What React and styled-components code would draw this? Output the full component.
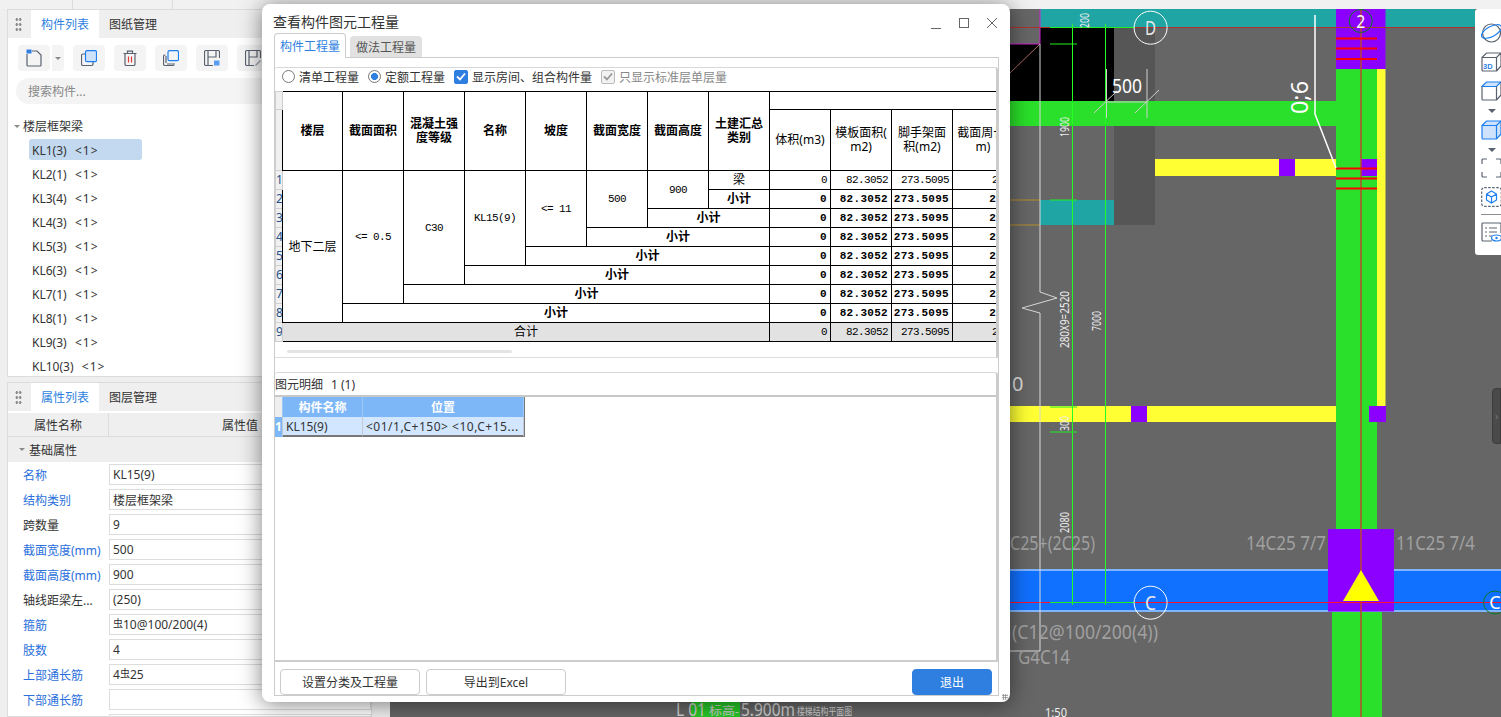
import styled, { createGlobalStyle } from "styled-components";

const GlobalStyle = createGlobalStyle`
  html, body {
    margin: 0;
    height: 100%;
    overflow: hidden;
    background: #f1f1f1;
    font-family: "Noto Sans", "Noto Sans CJK SC", sans-serif;
    font-size: 12px;
    color: #333;
  }
`;

const Page = styled.div`
  display: flex;
  flex-direction: column;
  height: 717px;
  width: 1501px;
  position: relative;
  overflow: hidden;
`;

const TopStrip = styled.div`
  display: flex;
  height: 9px;
  flex: none;
  background: #f1f1f1;
`;

const StripCell = styled.div`
  width: ${(p) => p.$w}px;
  border-right: 1px solid #dcdcdc;
`;

const Workspace = styled.div`
  display: flex;
  flex: 1;
  min-height: 0;
`;

const Sidebar = styled.div`
  width: 390px;
  flex: none;
  box-sizing: border-box;
  padding: 0 18px 0 7px;
  display: flex;
  flex-direction: column;
  gap: 5px;
  background: #efefef;
`;

const Panel = styled.section`
  background: #fff;
  border: 1px solid #dcdcdc;
  box-sizing: border-box;
  overflow: hidden;
  height: ${(p) => (p.$h ? `${p.$h}px` : "auto")};
  flex: ${(p) => (p.$h ? "none" : 1)};
`;

const PanelHead = styled.div`
  height: 28px;
  background: #efefef;
  display: flex;
  align-items: stretch;
  padding-left: 6px;
`;

const Grip = styled.div`
  width: 7px;
  margin: 7px 9px 7px 1px;
  background-image: radial-gradient(circle, #8a8a8a 1.2px, transparent 1.4px);
  background-size: 3.5px 5px;
`;

const HeadTab = styled.div`
  width: 68px;
  display: flex;
  align-items: center;
  justify-content: center;
  background: ${(p) => (p.$active ? "#fff" : "transparent")};
  color: ${(p) => (p.$active ? "#2e7fe0" : "#333")};
`;

const Toolbar = styled.div`
  display: flex;
  gap: 9px;
  padding: 7px 0 0 10px;
`;

const ToolBtn = styled.div`
  width: 32px;
  height: 26px;
  background: #f4f4f4;
  border-radius: 4px;
  flex: none;
  display: flex;
  align-items: center;
  justify-content: center;
`;

const SplitCaret = styled.div`
  width: 12px;
  height: 26px;
  margin-left: -8px;
  background: #f4f4f4;
  border-left: 1px solid #fff;
  border-radius: 0 4px 4px 0;
  display: flex;
  align-items: center;
  justify-content: center;
  flex: none;
`;

const Caret = styled.i`
  display: block;
  width: 0;
  height: 0;
  border-left: ${(p) => p.$s || 3}px solid transparent;
  border-right: ${(p) => p.$s || 3}px solid transparent;
  border-top: ${(p) => p.$s || 3}px solid ${(p) => p.$c || "#8a8a8a"};
`;

const Search = styled.div`
  margin: 7px 0 0 8px;
  height: 26px;
  background: #f4f4f4;
  border-radius: 13px;
  padding-left: 12px;
  display: flex;
  align-items: center;
  color: #888;
`;

const TreeHead = styled.div`
  display: flex;
  align-items: center;
  gap: 3px;
  height: 24px;
  margin-top: 10px;
  padding-left: 6px;
`;

const TreeList = styled.div`
  display: flex;
  flex-direction: column;
  padding-left: 21px;
`;

const TreeItem = styled.div`
  height: 24px;
  display: flex;
  align-items: center;
  white-space: pre;
  position: relative;
  padding-left: 3px;
  width: 113px;
  box-sizing: border-box;
  &::before {
    content: "";
    display: ${(p) => (p.$selected ? "block" : "none")};
    position: absolute;
    inset: 1px 0 2px 0;
    background: #c2d9f0;
    border-radius: 3px;
  }
  span {
    position: relative;
  }
`;

const Suffix = styled.span`
  letter-spacing: 1px;
  margin-left: 2px;
`;

const PropHead = styled.div`
  display: flex;
  height: 23px;
  margin-top: 2px;
  background: #efefef;
  border-bottom: 1px solid #dcdcdc;
`;

const PropHeadCell = styled.div`
  display: flex;
  align-items: center;
  justify-content: center;
  width: ${(p) => p.$w}px;
  flex: ${(p) => (p.$w ? "none" : 1)};
  border-right: ${(p) => (p.$w ? "1px solid #dcdcdc" : "0")};
  box-sizing: border-box;
`;

const PropGroup = styled.div`
  display: flex;
  align-items: center;
  gap: 4px;
  height: 25px;
  background: #eeeeee;
  padding-left: 11px;
`;

const PropRow = styled.div`
  display: flex;
  align-items: center;
  height: 25px;
`;

const PropLabel = styled.div`
  width: 101px;
  flex: none;
  box-sizing: border-box;
  padding-left: 15px;
  white-space: nowrap;
  color: ${(p) => (p.$blue ? "#2a6fdb" : "#333")};
`;

const PropValue = styled.div`
  flex: 1;
  height: 21px;
  box-sizing: border-box;
  border: 1px solid #dddddd;
  padding-left: 3px;
  display: flex;
  align-items: center;
  white-space: pre;
`;

const RebarMark = styled.span`
  font-size: 10px;
  position: relative;
  top: -2px;
`;

const Canvas = styled.main`
  flex: 1;
  position: relative;
  background: #666;
  overflow: hidden;
`;

const Drawing = styled.svg`
  display: block;
  font-family: "Noto Sans", "Noto Sans CJK SC", sans-serif;
`;

const SideTools = styled.aside`
  position: absolute;
  right: 0;
  top: 0;
  width: 26px;
  height: 246px;
  box-sizing: border-box;
  padding: 14px 0 0 6px;
  background: #fff;
  border-radius: 3px 0 0 3px;
  display: flex;
  flex-direction: column;
  overflow: hidden;
`;

const SideIcon = styled.div`
  height: 20px;
  margin-top: ${(p) => p.$mt || 0}px;
  flex: none;
`;

const SideCaret = styled.div`
  height: 4px;
  margin-top: 8px;
  margin-bottom: -1px;
  padding-left: 7px;
`;

const SideRule = styled.div`
  height: 1px;
  margin: 7px 0;
  background: #8f8f8f;
`;

const EdgeHandle = styled.div`
  position: absolute;
  right: 0;
  top: 379px;
  width: 9px;
  height: 56px;
  background: #4a4a4a;
  border: 1px solid #3c3c3c;
  box-sizing: border-box;
  border-radius: 4px 0 0 4px;
  color: #777;
  font-size: 10px;
  display: flex;
  align-items: center;
  padding-left: 2px;
`;

const Dialog = styled.div`
  position: absolute;
  left: 262px;
  top: 4px;
  width: 748px;
  height: 698px;
  background: #fff;
  border-radius: 8px;
  box-shadow: 0 2px 22px rgba(0, 0, 0, 0.5);
  display: flex;
  flex-direction: column;
  box-sizing: border-box;
  padding: 0 11px 6px 12px;
`;

const TitleBar = styled.header`
  height: 29px;
  flex: none;
  display: flex;
  align-items: center;
  justify-content: space-between;
  padding-top: 4px;
  box-sizing: border-box;
  margin-left: -1px;
  font-size: 14px;
  color: #333;
`;

const WindowBtns = styled.div`
  display: flex;
  gap: 14px;
  margin-top: 4px;
`;

const DialogTabs = styled.div`
  display: flex;
  align-items: flex-end;
  gap: 4px;
  height: 24px;
  flex: none;
`;

const DialogTab = styled.div`
  width: 72px;
  box-sizing: border-box;
  display: flex;
  align-items: center;
  justify-content: center;
  height: ${(p) => (p.$active ? 25 : 21)}px;
  margin-bottom: ${(p) => (p.$active ? -1 : 0)}px;
  background: ${(p) => (p.$active ? "#fff" : "#e1e1e1")};
  color: ${(p) => (p.$active ? "#2e7fe0" : "#555")};
  border: ${(p) => (p.$active ? "1px solid #ccc" : "0")};
  border-bottom: 0;
  border-radius: 4px 4px 0 0;
  position: relative;
`;

const TabBody = styled.div`
  flex: 1;
  min-height: 0;
  border: 1px solid #ccc;
  padding-top: 9px;
  display: flex;
  flex-direction: column;
`;

const QtyPane = styled.div`
  height: 291px;
  flex: none;
  border-top: 1px solid #d8d8d8;
  border-right: 2px solid #ccc;
  border-bottom: 1px solid #ddd;
  border-radius: 3px 3px 0 0;
  box-sizing: border-box;
  display: flex;
  flex-direction: column;
  overflow: hidden;
`;

const Options = styled.div`
  height: 23px;
  flex: none;
  display: flex;
  align-items: center;
  padding: 0 0 6px 7px;
  box-sizing: border-box;
  gap: 9px;
`;

const Option = styled.label`
  display: flex;
  align-items: center;
  gap: 4px;
  color: ${(p) => (p.$muted ? "#888" : "#333")};
`;

const Radio = styled.i`
  width: 13px;
  height: 13px;
  box-sizing: border-box;
  border-radius: 50%;
  border: 1px solid #777;
  background: ${(p) =>
    p.$on ? "radial-gradient(circle, #2e7fe0 3.2px, #fff 3.8px)" : "#fff"};
`;

const Check = styled.i`
  width: 14px;
  height: 14px;
  box-sizing: border-box;
  border-radius: 2px;
  display: flex;
  align-items: center;
  justify-content: center;
  background: ${(p) => (p.$muted ? "#f2f2f2" : "#2e7fe0")};
  border: 1px solid ${(p) => (p.$muted ? "#bbb" : "#2e7fe0")};
`;

const QtyScroll = styled.div`
  flex: none;
  height: 251px;
  overflow: hidden;
`;

const QtyTable = styled.table`
  border-collapse: collapse;
  table-layout: fixed;
  width: 738px;
  font-size: 12px;
  color: #000;

  td,
  th {
    border: 1px solid #000;
    padding: 0;
    overflow: hidden;
    text-align: center;
    line-height: 14px;
    box-sizing: border-box;
  }
`;

const HeadRow = styled.tr`
  height: ${(p) => p.$h}px;
`;

const BodyRow = styled.tr`
  height: 19px;
  background: ${(p) => (p.$total ? "#e2e2e2" : "#fff")};
  font-weight: ${(p) => (p.$bold ? 700 : 400)};
`;

const RowNo = styled.td`
  && {
    border: 1px solid #cfcfcf;
    background: #f0f0f0;
    color: #23528c;
    text-align: left;
    font-weight: 400;
    white-space: nowrap;
  }
`;

const Mono = styled.td`
  && {
    font-family: "Liberation Mono", monospace;
    font-size: 11px;
    letter-spacing: ${(p) => (p.$bold ? "0.3px" : "-0.6px")};
    text-align: ${(p) => (p.$right ? "right" : "center")};
    padding-right: ${(p) => (p.$right ? 3 : 0)}px;
    white-space: nowrap;
  }
`;

const ThinHead = styled.th`
  && {
    font-weight: 400;
  }
`;

const ScrollTrack = styled.div`
  flex: none;
  height: 15px;
  padding: 8px 0 0 12px;
  box-sizing: border-box;
`;

const ScrollThumb = styled.div`
  width: 225px;
  height: 3px;
  background: #e4e4e4;
  border-radius: 2px;
`;

const DetailPane = styled.div`
  margin-top: 14px;
  flex: 1;
  min-height: 0;
  border-top: 1px solid #d8d8d8;
  border-right: 2px solid #ccc;
  border-bottom: 2px solid #ccc;
  border-radius: 3px 3px 0 0;
  display: flex;
  flex-direction: column;
`;

const DetailTitle = styled.div`
  height: 22px;
  flex: none;
  display: flex;
  align-items: center;
  gap: 8px;
  border-bottom: 2px solid #c8c8c8;
  box-sizing: content-box;
`;

const DetailGrid = styled.div`
  display: grid;
  grid-template-columns: 8px 80px 161px;
  grid-template-rows: 20px 20px;
  width: 249px;
  border-right: 1px solid #777;
`;

const GridHead = styled.div`
  background: ${(p) => (p.$corner ? "#eee" : "#7db7f7")};
  color: #fff;
  font-weight: 700;
  display: flex;
  align-items: center;
  justify-content: center;
  border-right: 1px solid #9cc8f8;
`;

const GridCell = styled.div`
  background: ${(p) => (p.$no ? "#7db7f7" : "#d2e7ff")};
  color: ${(p) => (p.$no ? "#fff" : "#333")};
  font-weight: ${(p) => (p.$no ? 700 : 400)};
  display: flex;
  align-items: center;
  padding-left: ${(p) => (p.$no ? 0 : 3)}px;
  letter-spacing: ${(p) => p.$track || 0}px;
  white-space: nowrap;
  overflow: hidden;
  border-right: 1px solid #c2c9d2;
  border-bottom: 2px solid ${(p) => (p.$no ? "#7db7f7" : "#777")};
  box-sizing: border-box;
`;

const Footer = styled.footer`
  height: 33px;
  flex: none;
  display: flex;
  align-items: flex-start;
  gap: 6px;
  padding: 7px 6px 0 5px;
  box-sizing: border-box;
`;

const FootBtn = styled.button`
  width: ${(p) => (p.$primary ? 80 : 140)}px;
  height: 26px;
  margin-left: ${(p) => (p.$primary ? "auto" : 0)};
  border-radius: 4px;
  border: 1px solid ${(p) => (p.$primary ? "#2e7fe0" : "#ccc")};
  background: ${(p) => (p.$primary ? "#2e7fe0" : "#fff")};
  color: ${(p) => (p.$primary ? "#fff" : "#333")};
  font: inherit;
  padding: 0;
`;

const ResizeGrip = styled.div`
  position: absolute;
  right: 2px;
  bottom: 2px;
  width: 6px;
  height: 6px;
  background-image: radial-gradient(circle, #777 0.8px, transparent 1px);
  background-size: 2.5px 2.5px;
`;

const stroke = { fill: "none", stroke: "#5a6270", strokeWidth: 1.2 };
const blue = { fill: "none", stroke: "#1e7ff0", strokeWidth: 1.2 };

const NewIcon = () => (
  <svg width="16" height="18" viewBox="0 0 16 18">
    <rect x="0.5" y="0.5" width="5" height="4" fill="#2e7fe0" />
    <path d="M1 5v11a1 1 0 0 0 1 1h12a1 1 0 0 0 1-1V6l-4-4H6" {...stroke} />
  </svg>
);

const CopyIcon = () => (
  <svg width="16" height="16" viewBox="0 0 16 16">
    <path d="M4 4H2a1.500 1.500 0 0 0-1.500 1.500V14A1.500 1.500 0 0 0 2 15.500h8.500A1.500 1.500 0 0 0 12 14v-2" {...stroke} />
    <rect x="4.500" y="0.700" width="11" height="11" rx="1.500" fill="#cfe2fb" stroke="#1e7ff0" strokeWidth="1.200" />
  </svg>
);

const TrashIcon = () => (
  <svg width="14" height="16" viewBox="0 0 14 16">
    <path d="M0.500 3.500h13M4.500 3V1.200h5V3M2 3.500v10.800a1.200 1.200 0 0 0 1.200 1.200h7.600a1.200 1.200 0 0 0 1.200-1.200V3.500" {...stroke} />
    <path d="M5.500 6.500v6M8.500 6.500v6" fill="none" stroke="#e03a3a" strokeWidth="1.200" />
  </svg>
);

const StackIcon = () => (
  <svg width="16" height="16" viewBox="0 0 16 16">
    <path d="M2.500 5H2A1.500 1.500 0 0 0 .5 6.500V14A1.500 1.500 0 0 0 2 15.500h7.500A1.500 1.500 0 0 0 11 15" {...stroke} />
    <path d="M3 13V6M4 14h8" {...stroke} />
    <rect x="5" y="0.700" width="10.500" height="10" rx="1.500" {...blue} />
  </svg>
);

const SaveIcon = ({ pen }) => (
  <svg width="16" height="16" viewBox="0 0 16 16">
    <path d="M9 15.500H2A1.500 1.500 0 0 1 .5 14V2A1.500 1.500 0 0 1 2 .5h12A1.500 1.500 0 0 1 15.500 2v6" {...stroke} />
    <path d="M4 1v14M4 7h8V1" {...stroke} />
    {pen ? (
      <path d="M10 15l5-5 1 1-5 5z" fill="#9aa3ad" />
    ) : (
      <rect x="10" y="10.500" width="5.500" height="5" fill="#5b9df0" />
    )}
  </svg>
);

const Sphere = () => (
  <svg width="21" height="20" viewBox="0 0 21 20">
    <circle cx="10.500" cy="10" r="9" {...stroke} />
    <ellipse cx="10.500" cy="8.500" rx="11" ry="5" transform="rotate(-28 10.500 8.500)" {...blue} />
  </svg>
);

const Cube3D = () => (
  <svg width="21" height="20" viewBox="0 0 21 20">
    <path d="M1 5.500h14.500V19H2a1 1 0 0 1-1-1zM1 5.500L5.500 1H20v13l-4.500 5M15.500 5.500L20 1" {...stroke} />
    <text x="2" y="16.500" fontSize="7.500" fontWeight="700" fill="#2e7fe0" fontFamily="Liberation Sans, sans-serif">3D</text>
  </svg>
);

const CubeTop = () => (
  <svg width="21" height="20" viewBox="0 0 21 20">
    <path d="M1 5.500L5.500 1H20l-4.500 4.500z" fill="#cfe2fb" stroke="#1e7ff0" strokeWidth="1.200" />
    <path d="M1 5.500V18a1 1 0 0 0 1 1h13.500V5.500M15.500 19L20 14V1" {...stroke} />
  </svg>
);

const CubeSolid = () => (
  <svg width="21" height="20" viewBox="0 0 21 20">
    <path d="M1 5.500L5.500 1H20v13l-4.500 5H2a1 1 0 0 1-1-1z" fill="#cfe2fb" stroke="#1e7ff0" strokeWidth="1.200" />
    <path d="M1 5.500h14.500V19M15.500 5.500L20 1" {...blue} />
  </svg>
);

const DashedBox = () => (
  <svg width="21" height="20" viewBox="0 0 21 20">
    <path d="M1 6V2a1 1 0 0 1 1-1h4M15 1h4a1 1 0 0 1 1 1v4M1 14v4a1 1 0 0 0 1 1h4M15 19h4a1 1 0 0 0 1-1v-4" {...stroke} />
  </svg>
);

const DashedCube = () => (
  <svg width="21" height="20" viewBox="0 0 21 20">
    <rect x="0.700" y="0.700" width="19.600" height="18.600" rx="2.500" {...stroke} strokeDasharray="2.500 1.500" />
    <path d="M10.500 4l5 3v6l-5 3-5-3V7zM5.500 7l5 3 5-3M10.500 10v6" {...blue} />
  </svg>
);

const ListEye = () => (
  <svg width="21" height="20" viewBox="0 0 21 20">
    <path d="M11 19H2a1 1 0 0 1-1-1V2a1 1 0 0 1 1-1h17a1 1 0 0 1 1 1v9" {...stroke} />
    <path d="M4 6h2M8 6h8M4 10h2M8 10h8M4 14h2M8 14h3" {...stroke} strokeWidth="1" />
    <ellipse cx="15.500" cy="16" rx="5" ry="3" {...blue} />
    <circle cx="15.500" cy="16" r="1.200" fill="#1e7ff0" />
  </svg>
);

const CheckMark = ({ color }) => (
  <svg width="10" height="9" viewBox="0 0 10 9">
    <path d="M1 4.500l3 3 5-6" fill="none" stroke={color} strokeWidth="1.800" />
  </svg>
);

const MinGlyph = () => (
  <svg width="14" height="14" viewBox="0 0 14 14">
    <path d="M2 12.500h10" stroke="#666" fill="none" />
  </svg>
);

const MaxGlyph = () => (
  <svg width="14" height="14" viewBox="0 0 14 14">
    <rect x="2.500" y="2.500" width="9" height="9" stroke="#666" fill="none" />
  </svg>
);

const CloseGlyph = () => (
  <svg width="14" height="14" viewBox="0 0 14 14">
    <path d="M2 2l10 10M12 2L2 12" stroke="#666" fill="none" />
  </svg>
);

const beams = ["KL1(3)", "KL2(1)", "KL3(4)", "KL4(3)", "KL5(3)", "KL6(3)", "KL7(1)", "KL8(1)", "KL9(3)", "KL10(3)"];

const props = [
  { label: "名称", value: "KL15(9)", blue: true },
  { label: "结构类别", value: "楼层框架梁", blue: true },
  { label: "跨数量", value: "9" },
  { label: "截面宽度(mm)", value: "500", blue: true },
  { label: "截面高度(mm)", value: "900", blue: true },
  { label: "轴线距梁左...", value: "(250)" },
  { label: "箍筋", value: <><RebarMark>虫</RebarMark>10@100/200(4)</>, blue: true },
  { label: "肢数", value: "4", blue: true },
  { label: "上部通长筋", value: <>4<RebarMark>虫</RebarMark>25</>, blue: true },
  { label: "下部通长筋", value: "", blue: true },
  { label: "", value: "" },
];

const Amounts = ({ bold }) => (
  <>
    <Mono $right $bold={bold}>0</Mono>
    <Mono $right $bold={bold}>82.3052</Mono>
    <Mono $right $bold={bold}>273.5095</Mono>
    <Mono $right $bold={bold}>2.8</Mono>
  </>
);

const Quantities = () => (
  <QtyTable>
    <colgroup>
      <col width="7" />
      <col width="60" />
      {Array.from({ length: 11 }, (_, i) => (
        <col key={i} width="61" />
      ))}
    </colgroup>
    <thead>
      <HeadRow $h={18}>
        <RowNo />
        <th rowSpan={2}>楼层</th>
        <th rowSpan={2}>截面面积</th>
        <th rowSpan={2}>混凝土强<br />度等级</th>
        <th rowSpan={2}>名称</th>
        <th rowSpan={2}>坡度</th>
        <th rowSpan={2}>截面宽度</th>
        <th rowSpan={2}>截面高度</th>
        <th rowSpan={2}>土建汇总<br />类别</th>
        <th colSpan={4} />
      </HeadRow>
      <HeadRow $h={61}>
        <RowNo />
        <ThinHead>体积(m3)</ThinHead>
        <ThinHead>模板面积(<br />m2)</ThinHead>
        <ThinHead>脚手架面<br />积(m2)</ThinHead>
        <ThinHead>截面周长(<br />m)</ThinHead>
      </HeadRow>
    </thead>
    <tbody>
      <BodyRow>
        <RowNo>1</RowNo>
        <td rowSpan={8}>地下二层</td>
        <Mono rowSpan={7}>&lt;= 0.5</Mono>
        <Mono rowSpan={6}>C30</Mono>
        <Mono rowSpan={5}>KL15(9)</Mono>
        <Mono rowSpan={4}>&lt;= 11</Mono>
        <Mono rowSpan={3}>500</Mono>
        <Mono rowSpan={2}>900</Mono>
        <td>梁</td>
        <Amounts />
      </BodyRow>
      {[1, 2, 3, 4, 5, 6, 7].map((span) => (
        <BodyRow key={span} $bold>
          <RowNo>{span + 1}</RowNo>
          <td colSpan={span}>小计</td>
          <Amounts bold />
        </BodyRow>
      ))}
      <BodyRow $total>
        <RowNo>9</RowNo>
        <td colSpan={8}>合计</td>
        <Amounts />
      </BodyRow>
    </tbody>
  </QtyTable>
);

const CadDrawing = () => (
  <Drawing width="1111" height="708" viewBox="390 9 1111 708">
    <rect x="1114" y="9" width="41" height="216" fill="#565656" />
    <rect x="1040" y="9" width="435" height="18.500" fill="#20a5a5" />
    <rect x="1040" y="28" width="74" height="73" fill="#000" />
    <rect x="1000" y="44" width="40" height="57" fill="#000" />
    <path d="M1040 9v35h-40" stroke="#d020d0" fill="none" />
    <path d="M1040 44l-30 29" stroke="#b06a6a" fill="none" />
    <rect x="691" y="101" width="645" height="25" fill="#2ae02a" />
    <rect x="1155" y="159" width="181" height="17" fill="#ffff33" />
    <rect x="1279" y="159" width="16" height="17" fill="#8b00ff" />
    <rect x="1040" y="200" width="74" height="25" fill="#20a5a5" />
    <path d="M1000 200h40M1000 225h40" stroke="#b8902a" fill="none" />
    <rect x="1336" y="69" width="41" height="461" fill="#2ae02a" />
    <rect x="1377" y="69" width="8.500" height="337" fill="#ffff33" />
    <rect x="1336" y="9" width="49.500" height="60" fill="#8b00ff" />
    <rect x="1361" y="159" width="16" height="17" fill="#8b00ff" />
    <rect x="1000" y="406" width="336" height="16" fill="#ffff33" />
    <rect x="1131" y="406" width="16" height="16" fill="#8b00ff" />
    <rect x="1369" y="406" width="17" height="16" fill="#8b00ff" />
    <rect x="1332" y="611" width="50" height="106" fill="#2ae02a" />
    <rect x="1000" y="569" width="501" height="43" fill="#7fb4ff" />
    <rect x="1000" y="571" width="501" height="39" fill="#1070ff" />
    <rect x="1328" y="529" width="66" height="82.500" fill="#8b00ff" />
    <rect x="691" y="702" width="49" height="15" fill="#28c828" />

    <path d="M1000 27.500h475" stroke="#b03030" fill="none" />
    <path d="M1361 9v708" stroke="#b84a30" strokeWidth="1.500" fill="none" />
    <path d="M1361 570l18 31h-36z" fill="#ffff00" />
    <path d="M1000 602.500h501" stroke="#ff1030" fill="none" />
    <path d="M1336 38.500h41M1336 48.500h41M1336 59h41M1336 168.500h41M1336 178.500h41M1336 188.500h41" stroke="#ff0000" strokeWidth="2" fill="none" />

    <path d="M1072.500 24v581M1105.500 24v581" stroke="#22ff22" fill="none" />
    <path d="M1050 27.500h85M1050 44h27M1050 200h27M1050 407h27M1050 432h27M1050 602.500h85" stroke="#22ee22" fill="none" />

    <path d="M1040 44v248l17 6-35 10 18 5v338h-30" stroke="#d8d8d8" fill="none" />
    <path d="M1315 15v99l21 54" stroke="#fff" strokeWidth="1.500" fill="none" />
    <path d="M1106.500 69v49M1147 69v49M1106 102h41M1094 113l23-22M1135 113l24-23" stroke="#cfcfcf" fill="none" />
    <circle cx="1150.600" cy="27.700" r="16.500" stroke="#fff" fill="none" />
    <circle cx="1150.600" cy="602.700" r="16.500" stroke="#fff" fill="none" />
    <circle cx="1360.700" cy="21" r="11.500" stroke="#0c7a2a" fill="none" />
    <circle cx="1495" cy="602.500" r="11.500" stroke="#0c7a2a" fill="none" />

    <text x="1150.600" y="35" fontSize="19" fill="#e8e8e8" textAnchor="middle" textLength="11" lengthAdjust="spacingAndGlyphs">D</text>
    <text x="1150.600" y="610" fontSize="19" fill="#e8e8e8" textAnchor="middle" textLength="11" lengthAdjust="spacingAndGlyphs">C</text>
    <text x="1360.700" y="28" fontSize="18" fill="#fff" textAnchor="middle" textLength="9" lengthAdjust="spacingAndGlyphs">2</text>
    <text x="1495" y="609" fontSize="18" fill="#fff" textAnchor="middle">C</text>
    <text x="1112" y="93" fontSize="20" fill="#fff" textLength="30" lengthAdjust="spacingAndGlyphs">500</text>
    <text transform="translate(1308 114) rotate(-90)" fontSize="24" fill="#fff" textLength="33" lengthAdjust="spacingAndGlyphs">0;6</text>
    <text transform="translate(1069 137) rotate(-90)" fontSize="12" fill="#eee" textLength="20" lengthAdjust="spacingAndGlyphs">1900</text>
    <text transform="translate(1089 28) rotate(-90)" fontSize="12" fill="#eee" textLength="15" lengthAdjust="spacingAndGlyphs">200</text>
    <text transform="translate(1069 348) rotate(-90)" fontSize="12" fill="#eee" textLength="57" lengthAdjust="spacingAndGlyphs">280X9=2520</text>
    <text transform="translate(1101 331) rotate(-90)" fontSize="12" fill="#eee" textLength="20" lengthAdjust="spacingAndGlyphs">7000</text>
    <text transform="translate(1069 431) rotate(-90)" fontSize="12" fill="#eee" textLength="15" lengthAdjust="spacingAndGlyphs">300</text>
    <text transform="translate(1069 533) rotate(-90)" fontSize="12" fill="#eee" textLength="21" lengthAdjust="spacingAndGlyphs">2080</text>
    <text x="1012" y="391" fontSize="20" fill="#ddd">0</text>

    <g fontSize="19" fill="#a0a0a0">
      <text x="1246" y="550" textLength="80" lengthAdjust="spacingAndGlyphs">14C25 7/7</text>
      <text x="1396" y="550" textLength="79" lengthAdjust="spacingAndGlyphs">11C25 7/4</text>
      <text x="1010" y="550" textLength="85" lengthAdjust="spacingAndGlyphs">C25+(2C25)</text>
      <text x="1012" y="639" textLength="146" lengthAdjust="spacingAndGlyphs">(C12@100/200(4))</text>
      <text x="1018" y="664" textLength="52" lengthAdjust="spacingAndGlyphs">G4C14</text>
    </g>
    <text x="1045" y="717" fontSize="13" fill="#eee" textLength="22" lengthAdjust="spacingAndGlyphs">1:50</text>
    <g fill="#d0d0d0">
      <text x="676" y="716" fontSize="18" textLength="30" lengthAdjust="spacingAndGlyphs">L 01</text>
      <text x="709" y="715" fontSize="11" textLength="30" lengthAdjust="spacingAndGlyphs">标高-</text>
      <text x="741" y="716" fontSize="18" textLength="54" lengthAdjust="spacingAndGlyphs">5.900m</text>
      <text x="797" y="715" fontSize="10" textLength="55" lengthAdjust="spacingAndGlyphs">楼梯结构平面图</text>
    </g>
  </Drawing>
);

export default function App() {
  return (
    <Page>
      <GlobalStyle />
      <TopStrip>
        <StripCell $w={72} />
        <StripCell $w={99} />
      </TopStrip>
      <Workspace>
        <Sidebar>
          <Panel $h={368}>
            <PanelHead>
              <Grip />
              <HeadTab $active>构件列表</HeadTab>
              <HeadTab>图纸管理</HeadTab>
            </PanelHead>
            <Toolbar>
              <ToolBtn><NewIcon /></ToolBtn>
              <SplitCaret><Caret /></SplitCaret>
              <ToolBtn><CopyIcon /></ToolBtn>
              <ToolBtn><TrashIcon /></ToolBtn>
              <ToolBtn><StackIcon /></ToolBtn>
              <ToolBtn><SaveIcon /></ToolBtn>
              <ToolBtn><SaveIcon pen /></ToolBtn>
            </Toolbar>
            <Search>搜索构件...</Search>
            <TreeHead>
              <Caret />
              楼层框架梁
            </TreeHead>
            <TreeList>
              {beams.map((name, i) => (
                <TreeItem key={name} $selected={i === 0}>
                  <span>{name}  <Suffix>&lt;1&gt;</Suffix></span>
                </TreeItem>
              ))}
            </TreeList>
          </Panel>
          <Panel>
            <PanelHead>
              <Grip />
              <HeadTab $active>属性列表</HeadTab>
              <HeadTab>图层管理</HeadTab>
            </PanelHead>
            <PropHead>
              <PropHeadCell $w={101}>属性名称</PropHeadCell>
              <PropHeadCell>属性值</PropHeadCell>
            </PropHead>
            <PropGroup>
              <Caret />
              基础属性
            </PropGroup>
            {props.map((row, i) => (
              <PropRow key={i}>
                <PropLabel $blue={row.blue}>{row.label}</PropLabel>
                <PropValue>{row.value}</PropValue>
              </PropRow>
            ))}
          </Panel>
        </Sidebar>
        <Canvas>
          <CadDrawing />
          <SideTools>
            <SideIcon><Sphere /></SideIcon>
            <SideIcon $mt={9}><Cube3D /></SideIcon>
            <SideIcon $mt={9}><CubeTop /></SideIcon>
            <SideCaret><Caret $s={4} $c="#5a6270" /></SideCaret>
            <SideIcon $mt={8}><CubeSolid /></SideIcon>
            <SideCaret><Caret $s={4} $c="#5a6270" /></SideCaret>
            <SideIcon $mt={7}><DashedBox /></SideIcon>
            <SideIcon $mt={9}><DashedCube /></SideIcon>
            <SideRule />
            <SideIcon><ListEye /></SideIcon>
          </SideTools>
          <EdgeHandle>›</EdgeHandle>
        </Canvas>
      </Workspace>
      <Dialog>
        <TitleBar>
          查看构件图元工程量
          <WindowBtns>
            <MinGlyph />
            <MaxGlyph />
            <CloseGlyph />
          </WindowBtns>
        </TitleBar>
        <DialogTabs>
          <DialogTab $active>构件工程量</DialogTab>
          <DialogTab>做法工程量</DialogTab>
        </DialogTabs>
        <TabBody>
          <QtyPane>
            <Options>
              <Option><Radio />清单工程量</Option>
              <Option><Radio $on />定额工程量</Option>
              <Option><Check><CheckMark color="#fff" /></Check>显示房间、组合构件量</Option>
              <Option $muted><Check $muted><CheckMark color="#999" /></Check>只显示标准层单层量</Option>
            </Options>
            <QtyScroll>
              <Quantities />
            </QtyScroll>
            <ScrollTrack>
              <ScrollThumb />
            </ScrollTrack>
          </QtyPane>
          <DetailPane>
            <DetailTitle>
              <span>图元明细</span>
              <span>1 (1)</span>
            </DetailTitle>
            <DetailGrid>
              <GridHead $corner />
              <GridHead>构件名称</GridHead>
              <GridHead>位置</GridHead>
              <GridCell $no>1</GridCell>
              <GridCell>KL15(9)</GridCell>
              <GridCell $track={0.5}>&lt;01/1,C+150&gt; &lt;10,C+15...</GridCell>
            </DetailGrid>
          </DetailPane>
          <Footer>
            <FootBtn>设置分类及工程量</FootBtn>
            <FootBtn>导出到Excel</FootBtn>
            <FootBtn $primary>退出</FootBtn>
          </Footer>
        </TabBody>
        <ResizeGrip />
      </Dialog>
    </Page>
  );
}
